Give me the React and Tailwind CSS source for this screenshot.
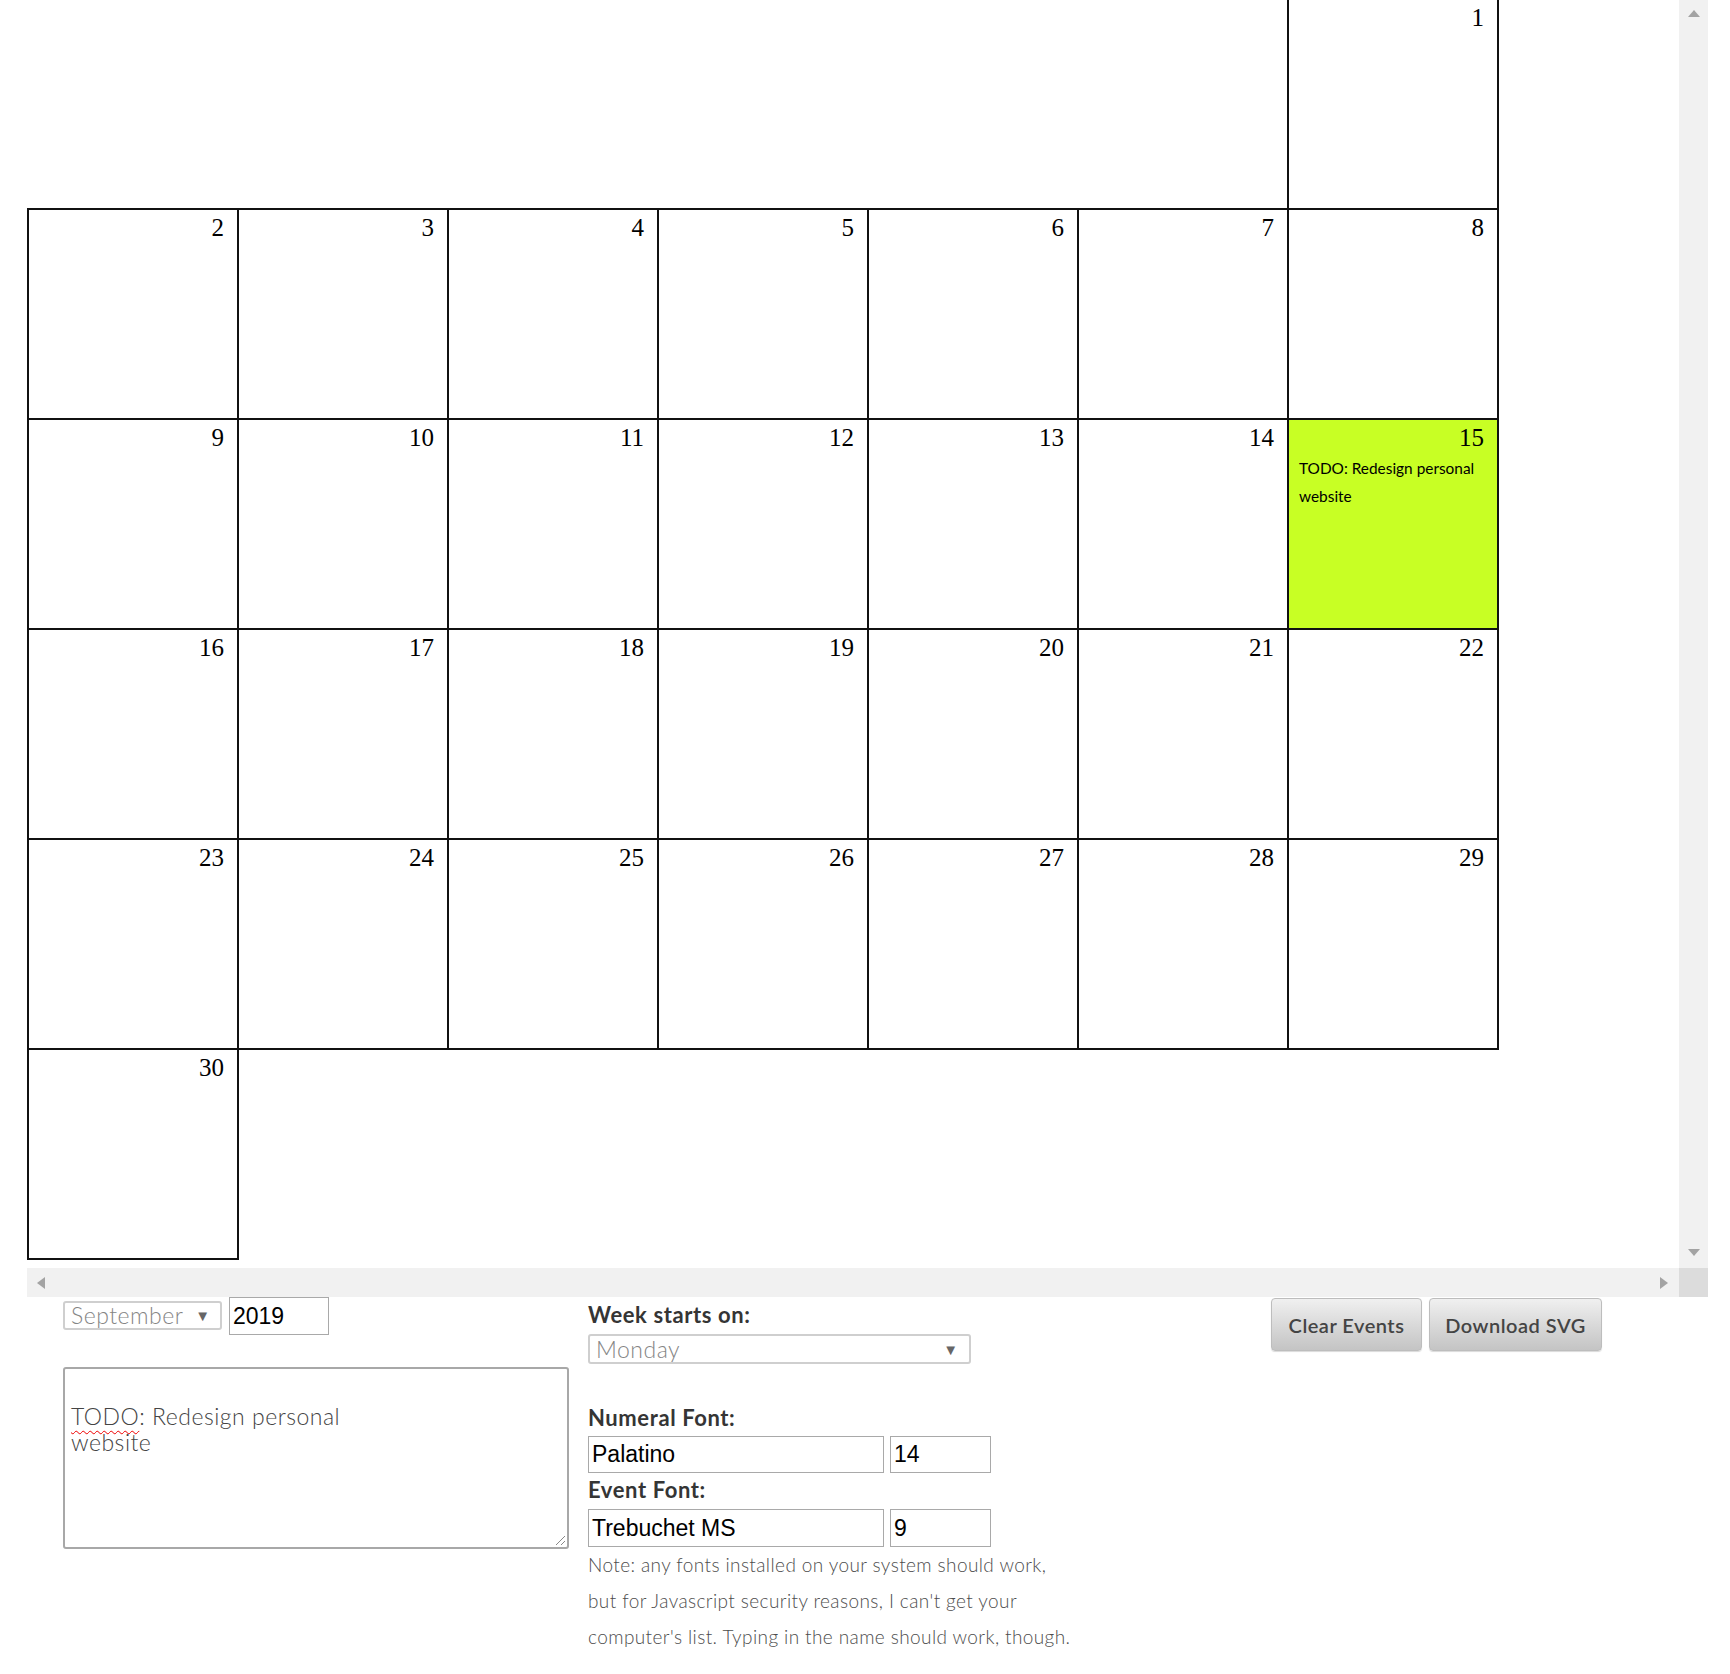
import React from "react";

function Cell({ day, event, col, row }) {
  const green = !!event;
  return (
    <div
      className={`w-[212px] h-[212px] border-2 border-[#111] pt-[5px] pl-[10px] pr-[13px] ${
        green ? "bg-[#c8ff24]" : "bg-white"
      }`}
      style={{ gridColumnStart: col + 1, gridRowStart: row + 1 }}
    >
      <div className="text-right text-[25px] leading-[25px] text-black font-['Liberation_Serif',serif]">
        {day}
      </div>
      {event && (
        <div className="mt-[4px] text-[15.4px] leading-[28px] text-black font-['Lato',sans-serif]">
          {event.map((l, i) => (
            <div key={i}>{l}</div>
          ))}
        </div>
      )}
    </div>
  );
}

function Calendar() {
  const cells = [];
  for (let d = 1; d <= 30; d++) {
    const idx = d - 1 + 6;
    const col = idx % 7;
    const row = Math.floor(idx / 7);
    cells.push(
      <Cell
        key={d}
        day={d}
        col={col}
        row={row}
        event={d === 15 ? ["TODO: Redesign personal", "website"] : null}
      />
    );
  }
  return (
    <div className="grid grid-cols-[repeat(7,210px)] grid-rows-[repeat(6,210px)] mt-[-2px]">
      {cells}
    </div>
  );
}

function ScrollArea() {
  return (
    <div className="ml-[27px] w-[1681px] h-[1297px] flex flex-col">
      <div className="flex h-[1268px]">
        <div className="w-[1652px] h-full overflow-hidden bg-white">
          <Calendar />
        </div>
        <div className="w-[29px] h-full bg-[#f1f1f1] flex flex-col justify-between items-center pt-[10px] pb-[12px]">
          <div className="w-0 h-0 border-x-[6.5px] border-x-transparent border-b-[7px] border-b-[#a3a3a3]" />
          <div className="w-0 h-0 border-x-[6.5px] border-x-transparent border-t-[7px] border-t-[#a3a3a3]" />
        </div>
      </div>
      <div className="flex h-[29px]">
        <div className="w-[1652px] h-full bg-[#f1f1f1] flex items-center justify-between pl-[10px] pr-[11px]">
          <div className="w-0 h-0 border-y-[6.5px] border-y-transparent border-r-[8px] border-r-[#a3a3a3]" />
          <div className="w-0 h-0 border-y-[6.5px] border-y-transparent border-l-[8px] border-l-[#a3a3a3]" />
        </div>
        <div className="w-[29px] h-full bg-[#dcdcdc]" />
      </div>
    </div>
  );
}

function SelectBox({ w, h, text, arrowRight }) {
  return (
    <div
      className={`${w} ${h} border-2 border-[#cfcfcf] rounded-[3px] bg-white flex items-center justify-between pl-[6px] ${arrowRight} text-[#858585] text-[23px] tracking-[0.5px] font-['Lato',sans-serif] font-light`}
    >
      <span className="leading-none">{text}</span>
      <span className="text-[15px] text-[#666] leading-none tracking-normal">▼</span>
    </div>
  );
}

function Controls() {
  const label =
    "text-[22px] leading-[26px] tracking-[0.6px] font-bold text-[#353535] font-['Lato',sans-serif]";
  const input =
    "border border-[#a9a9a9] bg-white text-black text-[23px] font-['Liberation_Sans',Arial,sans-serif] pl-[3px] flex items-center";
  const btn =
    "h-[53px] rounded-[4px] border border-[#bdbdbd] bg-gradient-to-b from-[#f0f0f0] to-[#c4c4c4] text-[20px] tracking-[0.5px] font-semibold text-[#444] font-['Lato',sans-serif] shadow-[0_1px_1px_rgba(0,0,0,0.15)]";
  return (
    <div className="flex">
      {/* left column */}
      <div className="ml-[63px] w-[506px]">
        <div className="flex items-start gap-[7px]">
          <div className="mt-[4px]">
            <SelectBox w="w-[159px]" h="h-[29px]" text="September" arrowRight="pr-[10px]" />
          </div>
          <div className={`${input} w-[100px] h-[38px]`}>2019</div>
        </div>
        <div className="relative mt-[32px] w-[506px] h-[182px] border-2 border-[#a8a8a8] rounded-[3px] bg-white pl-[6px] pt-[34px] text-[23px] tracking-[0.5px] leading-[26px] text-[#444] font-['Lato',sans-serif] font-light">
          <div>
            <span className="underline decoration-wavy decoration-[#e00] decoration-1 underline-offset-[5px]">
              TODO
            </span>
            : Redesign personal
          </div>
          <div>website</div>
          <svg
            className="absolute right-[1px] bottom-[1px]"
            width="12"
            height="12"
            viewBox="0 0 12 12"
          >
            <line x1="11" y1="2" x2="2" y2="11" stroke="#888" strokeWidth="1" />
            <line x1="11" y1="7" x2="7" y2="11" stroke="#888" strokeWidth="1" />
          </svg>
        </div>
      </div>

      {/* middle column */}
      <div className="ml-[19px] w-[600px] pt-[5px]">
        <div className={label}>Week starts on:</div>
        <div className="mt-[6px]">
          <SelectBox w="w-[383px]" h="h-[30px]" text="Monday" arrowRight="pr-[11px]" />
        </div>
        <div className={`${label} mt-[41px]`}>Numeral Font:</div>
        <div className="mt-[5px] flex gap-[6px]">
          <div className={`${input} w-[296px] h-[37px]`}>Palatino</div>
          <div className={`${input} w-[101px] h-[37px]`}>14</div>
        </div>
        <div className={`${label} mt-[4px]`}>Event Font:</div>
        <div className="mt-[6px] flex gap-[6px]">
          <div className={`${input} w-[296px] h-[38px]`}>Trebuchet MS</div>
          <div className={`${input} w-[101px] h-[38px]`}>9</div>
        </div>
        <div className="text-[19px] tracking-[0.4px] leading-[36px] text-[#4d4d4d] font-['Lato',sans-serif] font-light">
          <div>Note: any fonts installed on your system should work,</div>
          <div>but for Javascript security reasons, I can't get your</div>
          <div>computer's list. Typing in the name should work, though.</div>
        </div>
      </div>

      {/* buttons */}
      <div className="ml-[83px] pt-[1px] flex gap-[7px]">
        <button className={`${btn} w-[151px]`}>Clear Events</button>
        <button className={`${btn} w-[173px]`}>Download SVG</button>
      </div>
    </div>
  );
}

export default function App() {
  return (
    <div className="w-[1730px] h-[1674px] bg-white overflow-hidden">
      <ScrollArea />
      <Controls />
    </div>
  );
}
